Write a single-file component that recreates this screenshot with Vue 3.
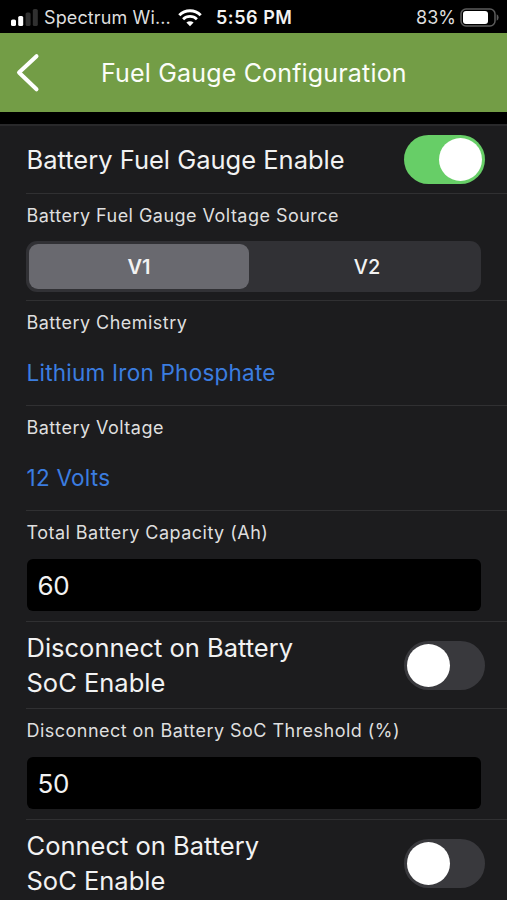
<script setup>
import { ref } from 'vue'

const sources = ['V1', 'V2']
const source = ref('V1')
const gaugeEnabled = ref(true)
const disconnectEnabled = ref(false)
const connectEnabled = ref(false)
const capacity = ref('60')
const threshold = ref('50')
</script>

<template>
  <div class="screen">
    <header class="status">
      <div class="carrier">
        <svg class="signal" width="28" height="18" viewBox="0 0 28 18">
          <rect x="0" y="10.5" width="5" height="6.5" rx="1.6" fill="#fff" />
          <rect x="7.2" y="7" width="5" height="10" rx="1.6" fill="#fff" />
          <rect x="14.6" y="3.5" width="5" height="13.5" rx="1.6" fill="#303030" />
          <rect x="21.8" y="0" width="5" height="17" rx="1.6" fill="#303030" />
        </svg>
        <span class="carrier-name">Spectrum Wi...</span>
        <svg class="wifi" width="24" height="18" viewBox="0 0 24 18" fill="none" stroke="#fff">
          <path d="M1.3 6.2 A15.2 15.2 0 0 1 22.7 6.2" stroke-width="3" />
          <path d="M5.1 10.2 A9.8 9.8 0 0 1 18.9 10.2" stroke-width="2.8" />
          <path d="M12 17.3 L8.4 13.6 A5.2 5.2 0 0 1 15.6 13.6 Z" fill="#fff" stroke="none" />
        </svg>
      </div>
      <span class="time">5:56 PM</span>
      <div class="power">
        <span class="percent">83%</span>
        <svg width="39" height="19" viewBox="0 0 39 19">
          <rect x="1" y="1" width="34" height="17" rx="5" fill="none" stroke="#5c5c5c" stroke-width="1.5" />
          <rect x="3" y="3" width="25" height="13" rx="3" fill="#fff" />
          <path d="M36.7 6.2 Q38.6 7.2 38.6 9.5 Q38.6 11.8 36.7 12.8 Z" fill="#5c5c5c" />
        </svg>
      </div>
    </header>

    <nav class="navbar">
      <svg class="back" width="24" height="40" viewBox="0 0 24 40">
        <path d="M20.5 3.2 L3 19.5 L20.5 36.3" fill="none" stroke="#fff" stroke-width="4" stroke-linecap="round" stroke-linejoin="round" />
      </svg>
      <h1>Fuel Gauge Configuration</h1>
    </nav>

    <main class="form">
      <section class="row toggle-row first">
        <span class="title">Battery Fuel Gauge Enable</span>
        <button class="switch" :class="{ on: gaugeEnabled }" @click="gaugeEnabled = !gaugeEnabled"><i /></button>
      </section>

      <section class="row source">
        <span class="label">Battery Fuel Gauge Voltage Source</span>
        <div class="segments">
          <button v-for="s in sources" :key="s" :class="{ active: s === source }" @click="source = s">{{ s }}</button>
        </div>
      </section>

      <section class="row choice">
        <span class="label">Battery Chemistry</span>
        <a class="value">Lithium Iron Phosphate</a>
      </section>

      <section class="row choice">
        <span class="label">Battery Voltage</span>
        <a class="value">12 Volts</a>
      </section>

      <section class="row entry">
        <span class="label">Total Battery Capacity (Ah)</span>
        <input v-model="capacity" class="field" />
      </section>

      <section class="row toggle-row double">
        <span class="title">Disconnect on Battery<br />SoC Enable</span>
        <button class="switch" :class="{ on: disconnectEnabled }" @click="disconnectEnabled = !disconnectEnabled"><i /></button>
      </section>

      <section class="row entry">
        <span class="label">Disconnect on Battery SoC Threshold (%)</span>
        <input v-model="threshold" class="field" />
      </section>

      <section class="row toggle-row double">
        <span class="title">Connect on Battery<br />SoC Enable</span>
        <button class="switch" :class="{ on: connectEnabled }" @click="connectEnabled = !connectEnabled"><i /></button>
      </section>
    </main>
  </div>
</template>

<style>
body {
  margin: 0;
  background: #000;
}
</style>

<style scoped>
.screen,
.screen * {
  box-sizing: border-box;
}
.screen {
  width: 507px;
  height: 900px;
  overflow: hidden;
  background: #000;
  color: #f2f2f2;
  font-family: Inter, "Liberation Sans", sans-serif;
}
button,
input {
  font: inherit;
  color: inherit;
  border: 0;
  outline: 0;
  margin: 0;
}
svg {
  display: block;
  flex: none;
}
.status {
  height: 33px;
  display: grid;
  grid-template-columns: 215px 1fr auto;
  align-items: center;
  padding: 2px 8px 0 11px;
  font-size: 18px;
  line-height: 22px;
  white-space: nowrap;
}
.carrier {
  display: flex;
  align-items: center;
}
.signal {
  margin-right: 5px;
}
.carrier-name {
  width: 127px;
  margin-right: 7px;
  letter-spacing: 0.12px;
}
.carrier,
.power {
  color: #dedede;
}
.time {
  font-weight: 600;
  margin-left: -10px;
  letter-spacing: 0.55px;
}
.power {
  display: flex;
  align-items: center;
  gap: 4px;
}
.navbar {
  height: 79px;
  display: grid;
  grid-template-columns: 101px 1fr;
  align-items: center;
  background: #739d46;
}
.back {
  margin-left: 16px;
}
h1 {
  margin: 0;
  font-size: 25px;
  font-weight: 400;
  line-height: 32px;
  letter-spacing: 0.17px;
  white-space: nowrap;
  color: #fbfdf8;
}
.form {
  margin-top: 12px;
  background: #1c1c1e;
  border-top: 2px solid #29292b;
}
.row {
  margin-left: 26px;
  padding-right: 26px;
  border-bottom: 1px solid #303032;
}
.label {
  display: block;
  padding-left: 0.5px;
  font-size: 18px;
  line-height: 22px;
  letter-spacing: 0.47px;
  color: #dfdfdf;
  white-space: nowrap;
}
.title {
  padding-left: 0.5px;
  font-size: 25.5px;
  line-height: 35px;
  white-space: nowrap;
}
.toggle-row {
  display: flex;
  align-items: center;
  justify-content: space-between;
  padding-right: 22px;
}
.first {
  height: 68px;
}
.double {
  height: 87px;
}
.switch {
  width: 81px;
  height: 49px;
  padding: 3px;
  border-radius: 25px;
  background: #39393d;
  display: flex;
}
.switch i {
  width: 43px;
  height: 43px;
  border-radius: 50%;
  background: #fff;
}
.switch.on {
  background: #67ce67;
  justify-content: flex-end;
}
.source {
  height: 107px;
  padding-top: 11px;
}
.segments {
  display: grid;
  grid-template-columns: 220px 226px;
  justify-content: space-between;
  height: 51px;
  margin-top: 14px;
  padding: 3px 1px 3px 3px;
  border-radius: 11px;
  background: #313135;
}
.segments button {
  padding: 0;
  font-size: 20px;
  font-weight: 500;
  border-radius: 9px;
  background: transparent;
}
.segments .active {
  background: #69696f;
  font-weight: 600;
}
.choice {
  height: 105px;
  padding-top: 11px;
}
.value {
  display: block;
  padding-left: 0.5px;
  margin-top: 23px;
  font-size: 22.5px;
  line-height: 32px;
  letter-spacing: 0.24px;
  color: #3b7de0;
}
.entry {
  height: 111px;
  padding-top: 11px;
}
.field {
  display: block;
  width: 454px;
  height: 52px;
  margin: 15px 0 0 1px;
  padding: 0 10.5px;
  border-radius: 6px;
  background: #000;
  font-size: 26px;
  letter-spacing: -0.3px;
}
</style>
